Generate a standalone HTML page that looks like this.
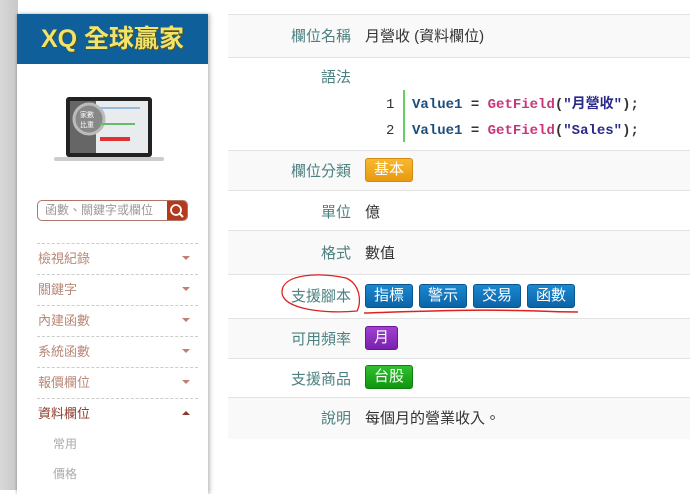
<!DOCTYPE html>
<html><head><meta charset="utf-8"><style>
*{margin:0;padding:0;box-sizing:border-box}
body{width:690px;height:490px;overflow:hidden;background:#fff;font-family:"Liberation Sans","Noto Sans CJK TC",sans-serif;position:relative}
.lbg{position:absolute;left:0;top:0;width:18px;height:490px;background:linear-gradient(90deg,#d8d8d8,#c8c8c8)}
.side{position:absolute;left:17px;top:14px;width:191px;height:480px;background:#fff;box-shadow:2px 0 4px rgba(0,0,0,.25),-1px 0 2px rgba(0,0,0,.15)}
.logo{height:50px;background:#0e5f9a;color:#f2e46a;font-weight:bold;font-size:25px;text-align:center;line-height:50px;letter-spacing:0;text-shadow:1px 1px 0 #5a5010}
.lap{position:absolute;left:37px;top:81px;width:110px;height:70px}
.search{position:absolute;left:20px;top:186px;width:151px;height:21px;border:1px solid #b0766a;border-radius:5px;overflow:hidden;font-size:12px;color:#999;line-height:19px;padding-left:7px}
.search b{position:absolute;right:0;top:0;width:20px;height:21px;background:#b53a1c}
.menu{position:absolute;left:20px;top:229px;width:161px}
.mi{height:31px;border-top:1px dashed #ccc;font-size:13px;color:#b88878;line-height:29px;padding-left:1px;position:relative}
.mi:after{content:"";position:absolute;right:8px;top:12px;border:4px solid transparent;border-top:4px solid #c08070;border-bottom:0}
.mi.open{color:#8a3a28}
.mi.open:after{border-top:0;border-bottom:4px solid #8a3a28;top:12px}
.sub{font-size:12px;color:#aaa;padding-left:16px;height:30px;line-height:30px}
.main{position:absolute;left:228px;top:14px;width:462px}
.row{border-top:1px solid #e3e3e3;position:relative;font-size:15px;color:#333}
.row.g{background:#f9f9f9}
.lb{position:absolute;right:339px;color:#4d8080;white-space:nowrap}
.v{position:absolute;left:137px}
.tag{display:inline-block;color:#fff;font-size:15px;padding:0 8px;height:24px;line-height:22px;border-radius:3px;margin-right:6px}
.blue{background:linear-gradient(#1a88d0,#0b64a8);border:1px solid #0a5590}
.code{font-family:"Liberation Mono","Noto Sans CJK TC",monospace;font-size:14px;font-weight:bold}
</style></head><body>
<div class="lbg"></div>
<div class="side">
<div class="logo">XQ 全球贏家</div>
<svg class="lap" viewBox="0 0 110 70"><rect x="12" y="2" width="86" height="60" rx="3" fill="#222"/><rect x="16" y="6" width="78" height="52" fill="#e8ecef"/><rect x="16" y="6" width="26" height="52" fill="#666"/><circle cx="35" cy="24" r="15" fill="#888" stroke="#bbb" stroke-width="3"/><text x="26" y="22" font-size="7" fill="#fff">家數</text><text x="26" y="32" font-size="7" fill="#fff">比重</text><rect x="46" y="42" width="30" height="4" fill="#d33"/><rect x="46" y="12" width="40" height="2" fill="#9bd"/><rect x="46" y="28" width="35" height="2" fill="#6b6"/><rect x="0" y="62" width="110" height="4" rx="2" fill="#ccc"/></svg>
<div class="search">函數、關鍵字或欄位<b><svg width="20" height="21"><circle cx="9" cy="9" r="5" fill="none" stroke="#fff" stroke-width="1.8"/><line x1="12.5" y1="12.5" x2="16" y2="16" stroke="#fff" stroke-width="2"/></svg></b></div>
<div class="menu">
<div class="mi">檢視紀錄</div><div class="mi">關鍵字</div><div class="mi">內建函數</div><div class="mi">系統函數</div><div class="mi">報價欄位</div><div class="mi open">資料欄位</div>
<div class="sub">常用</div><div class="sub">價格</div>
</div>
</div>
<div class="main">
<div class="row g" style="height:43px"><span class="lb" style="top:10px">欄位名稱</span><span class="v" style="top:10px">月營收 (資料欄位)</span></div>
<div class="row" style="height:93px"><span class="lb" style="top:8px">語法</span>
<div style="position:absolute;left:158px;top:34px;font-family:'Liberation Mono',monospace;font-size:14px;color:#333;line-height:26px;text-align:right">1<br>2</div>
<div style="position:absolute;left:175px;top:32px;width:2px;height:52px;background:#6c6"></div>
<div class="code" style="position:absolute;left:184px;top:34px;line-height:26px;white-space:nowrap"><span style="color:#1c4e7a">Value1</span> <span style="color:#333">=</span> <span style="color:#c8357a">GetField</span>(<span style="color:#2a2a8a">"月營收"</span>);<br><span style="color:#1c4e7a">Value1</span> <span style="color:#333">=</span> <span style="color:#c8357a">GetField</span>(<span style="color:#2a2a8a">"Sales"</span>);</div></div>
<div class="row g" style="height:40px"><span class="lb" style="top:9px">欄位分類</span><span class="v" style="top:7px"><span class="tag" style="background:linear-gradient(#f8b830,#e89a10);border:1px solid #d08a10">基本</span></span></div>
<div class="row" style="height:40px"><span class="lb" style="top:10px">單位</span><span class="v" style="top:10px">億</span></div>
<div class="row g" style="height:44px"><span class="lb" style="top:11px">格式</span><span class="v" style="top:11px">數值</span></div>
<div class="row" style="height:44px"><span class="lb" style="top:10px">支援腳本</span><span class="v" style="top:9px;white-space:nowrap"><span class="tag blue">指標</span><span class="tag blue">警示</span><span class="tag blue">交易</span><span class="tag blue">函數</span></span>
<svg style="position:absolute;left:50px;top:-3px" width="320" height="50"><path d="M68 6 C40 0 4 2 4 20 C4 38 50 42 79 39 C84 30 82 12 68 6" fill="none" stroke="#d22" stroke-width="1.3"/><path d="M86 41 C150 39 200 37 260 39 C280 40 300 40 300 40" fill="none" stroke="#d22" stroke-width="1.5"/></svg></div>
<div class="row g" style="height:40px"><span class="lb" style="top:9px">可用頻率</span><span class="v" style="top:7px"><span class="tag" style="background:linear-gradient(#a040d0,#7a20b0);border:1px solid #6a1898">月</span></span></div>
<div class="row" style="height:39px"><span class="lb" style="top:9px">支援商品</span><span class="v" style="top:6px"><span class="tag" style="background:linear-gradient(#30c030,#10960f);border:1px solid #0c800c">台股</span></span></div>
<div class="row g" style="height:42px"><span class="lb" style="top:9px">說明</span><span class="v" style="top:9px">每個月的營業收入。</span></div>
</div>
</body></html>
